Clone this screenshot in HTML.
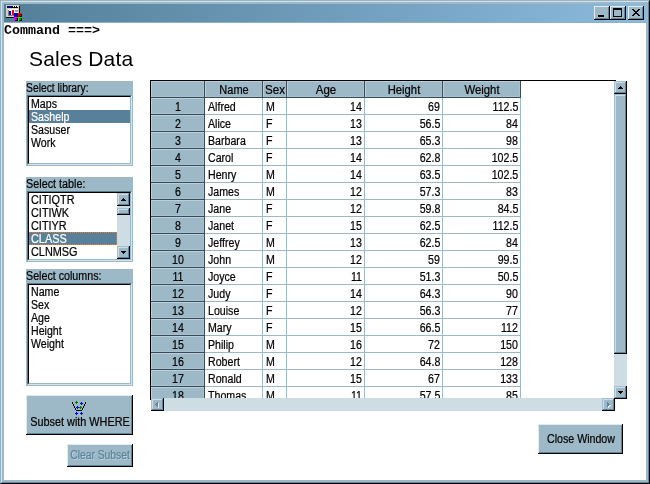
<!DOCTYPE html><html><head><meta charset="utf-8"><title>Sales Data</title><style>
html,body{margin:0;padding:0;}
body{width:650px;height:484px;overflow:hidden;background:#fff;position:relative;font-family:"Liberation Sans",sans-serif;font-size:12.5px;color:#000;}
.a{position:absolute;}
.t{-webkit-text-stroke:0.22px currentColor;display:inline-block;transform:scaleX(.85);white-space:nowrap;line-height:13px;}
.l .t{transform-origin:left center;}
.r .t{transform-origin:right center;}
.c .t{position:absolute;left:50%;top:0;transform-origin:center center;transform:translateX(-50%) scaleX(.85);}
.hc .t{line-height:16px;top:1px;}
.hc{position:absolute;background:#9db9c7;box-shadow:inset 1px 1px 0 #b7d1e1, inset -1px -1px 0 #a6c1d2;text-align:center;}
.cell{position:absolute;height:16px;line-height:16px;}
.panel{position:absolute;background:#9db9c7;}
.lb{position:absolute;background:#fff;border-top:1px solid #000;border-left:1px solid #000;border-right:1px solid #d5e3ec;border-bottom:1px solid #d5e3ec;box-shadow:-1px -1px 0 #5a7a8c;}
.lbo{position:absolute;border:1px solid #5a7a8c;border-right-color:#d3e2eb;border-bottom-color:#d3e2eb;}
.lbi{position:relative;background:#fff;border:1px solid #000;border-right-color:#9db9c7;border-bottom-color:#9db9c7;overflow:hidden;}
.li{position:absolute;left:0;height:13px;line-height:13px;padding-left:2px;}
.li .t{position:relative;top:1px;}
.btn{position:absolute;background:#9db9c7;box-shadow:inset -1px -1px 0 #000, inset 1px 1px 0 #dfe9ef, inset -2px -2px 0 #5f859c;text-align:center;}
.sb{position:absolute;background:#9db9c7;box-shadow:inset -1px -1px 0 #000, inset 1px 1px 0 #a4bfd0, inset -2px -2px 0 #5f859c, inset 2px 2px 0 #cbdde8;}
.wb{position:absolute;background:#9db9c7;box-shadow:inset -1px -1px 0 #000, inset 1px 1px 0 #e3ecf1, inset -2px -2px 0 #5f859c;}
</style></head><body><div id="root" style="position:absolute;left:0;top:0;width:650px;height:484px;overflow:hidden;will-change:transform;">
<div class="a" style="left:0;top:0;width:650px;height:484px;box-sizing:border-box;border:1px solid #98b3c4;border-right-color:#000;border-bottom-color:#000;"></div>
<div class="a" style="left:1px;top:1px;width:648px;height:482px;box-sizing:border-box;border:1px solid #d3e2eb;border-right-color:#5f879f;border-bottom-color:#5f879f;"></div>
<div class="a" style="left:2px;top:2px;width:646px;height:480px;box-sizing:border-box;border:2px solid #9db9c7;"></div>
<div class="a" style="left:4px;top:4px;width:642px;height:18px;background:linear-gradient(to right,#547f99,#8bbadc);"></div>
<div class="a" style="left:4px;top:22px;width:642px;height:1px;background:#8fb0c5;"></div>
<svg class="a" style="left:6px;top:5px" width="16" height="16" viewBox="0 0 16 16" shape-rendering="crispEdges">
<rect x="0" y="0" width="13" height="12" fill="#d4d0c8"/><rect x="13" y="1" width="1" height="12" fill="#000"/><rect x="0" y="12" width="14" height="1" fill="#000"/>
<rect x="1" y="1" width="5" height="2" fill="#000080"/><rect x="6" y="1" width="6" height="2" fill="#000"/>
<rect x="7" y="1" width="1" height="1" fill="#fff"/><rect x="9" y="1" width="1" height="1" fill="#fff"/><rect x="11" y="1" width="1" height="1" fill="#fff"/>
<rect x="2" y="4" width="10" height="7" fill="#fff"/>
<rect x="2" y="5" width="1" height="5" fill="#808080"/><rect x="2" y="10" width="6" height="1" fill="#808080"/>
<rect x="3" y="6" width="2" height="4" fill="#0000ff"/><rect x="6" y="5" width="2" height="5" fill="#ff0000"/><rect x="9" y="5" width="3" height="2" fill="#a0a0a0"/>
<rect x="8" y="8" width="4" height="4" fill="#000"/><rect x="8" y="8" width="4" height="1" fill="#0000ff"/><rect x="8" y="8" width="1" height="4" fill="#0000ff"/><rect x="9" y="9" width="2" height="2" fill="#000090"/>
<rect x="12" y="8" width="4" height="4" fill="#000"/><rect x="12" y="8" width="4" height="1" fill="#ff0000"/><rect x="12" y="8" width="1" height="4" fill="#ff0000"/><rect x="13" y="9" width="2" height="2" fill="#900000"/>
<rect x="8" y="12" width="4" height="4" fill="#000"/><rect x="8" y="12" width="4" height="1" fill="#ff00ff"/><rect x="8" y="12" width="1" height="4" fill="#ff00ff"/><rect x="9" y="13" width="2" height="2" fill="#900090"/>
<rect x="12" y="12" width="4" height="4" fill="#000"/><rect x="12" y="12" width="4" height="1" fill="#00ff00"/><rect x="12" y="12" width="1" height="4" fill="#00ff00"/><rect x="13" y="13" width="2" height="2" fill="#009000"/>
</svg>
<div class="wb" style="left:594px;top:6px;width:16px;height:14px;"><div class="a" style="left:4px;top:9px;width:6px;height:2px;background:#000"></div></div>
<div class="wb" style="left:610px;top:6px;width:16px;height:14px;"><div class="a" style="left:3px;top:2px;width:9px;height:9px;box-sizing:border-box;border:1px solid #000;border-top-width:2px"></div></div>
<div class="wb" style="left:628px;top:6px;width:16px;height:14px;"><svg class="a" style="left:4px;top:3px" width="8" height="7" viewBox="0 0 8 7" shape-rendering="crispEdges"><path d="M0 0h2v1h1v1h2v-1h1v-1h2v1h-1v1h-1v1h-1v1h1v1h1v1h1v1h-2v-1h-1v-1h-2v1h-1v1h-2v-1h1v-1h1v-1h1v-1h-1v-1h-1v-1h-1z" fill="#000"/></svg></div>
<div class="a" style="left:4px;top:24px;height:14px;line-height:14px;font-family:'Liberation Mono',monospace;font-weight:bold;font-size:13.33px;white-space:pre;">Command ===&gt;</div>
<div class="a" style="left:29px;top:47px;font-size:21px;line-height:24px;white-space:nowrap;letter-spacing:.15px;">Sales Data</div>
<div class="panel" style="left:26px;top:81px;width:107px;height:85px;"><div class="a l" style="left:0px;top:0px;height:13px;"><span class="t" style="transform:scaleX(0.826)">Select library:</span></div><div class="lbo" style="left:1px;top:14px;"><div class="lbi" style="width:101px;height:66px;"><div class="li l" style="top:0px;width:99px;"><span class="t" style="transform:scaleX(0.85)">Maps</span></div><div class="li l" style="top:13px;width:99px;background:#58809a;color:#fff;"><span class="t" style="transform:scaleX(0.85)">Sashelp</span></div><div class="li l" style="top:26px;width:99px;"><span class="t" style="transform:scaleX(0.85)">Sasuser</span></div><div class="li l" style="top:39px;width:99px;"><span class="t" style="transform:scaleX(0.85)">Work</span></div></div></div></div>
<div class="panel" style="left:26px;top:177px;width:107px;height:85px;"><div class="a l" style="left:0px;top:0px;height:13px;"><span class="t" style="transform:scaleX(0.865)">Select table:</span></div><div class="lbo" style="left:1px;top:14px;"><div class="lbi" style="width:101px;height:66px;"><div class="li l" style="top:0px;width:86px;"><span class="t" style="transform:scaleX(0.87)">CITIQTR</span></div><div class="li l" style="top:13px;width:86px;"><span class="t" style="transform:scaleX(0.87)">CITIWK</span></div><div class="li l" style="top:26px;width:86px;"><span class="t" style="transform:scaleX(0.87)">CITIYR</span></div><div class="li l" style="top:39px;width:86px;background:#58809a;color:#fff;outline:1px dotted #c08a68;outline-offset:-1px;"><span class="t" style="transform:scaleX(0.87)">CLASS</span></div><div class="li l" style="top:52px;width:86px;"><span class="t" style="transform:scaleX(0.87)">CLNMSG</span></div><div class="a" style="left:88px;top:0;width:13px;height:66px;background:#cedde4;"></div><div class="sb" style="left:88px;top:0;width:13px;height:13px;"><svg class="a" style="left:4px;top:5px" width="5" height="3" viewBox="0 0 5 3" shape-rendering="crispEdges"><path d="M2 0h1v1h1v1h1v1h-5v-1h1v-1h1z" fill="#000"/></svg></div><div class="sb" style="left:88px;top:15px;width:13px;height:7px;"></div><div class="sb" style="left:88px;top:53px;width:13px;height:13px;"><svg class="a" style="left:4px;top:5px" width="5" height="3" viewBox="0 0 5 3" shape-rendering="crispEdges"><path d="M0 0h5v1h-1v1h-1v1h-1v-1h-1v-1h-1z" fill="#000"/></svg></div></div></div></div>
<div class="panel" style="left:26px;top:269px;width:107px;height:117px;"><div class="a l" style="left:0px;top:0px;height:13px;"><span class="t" style="transform:scaleX(0.855)">Select columns:</span></div><div class="lbo" style="left:1px;top:14px;"><div class="lbi" style="width:101px;height:98px;"><div class="li l" style="top:0px;width:99px;"><span class="t" style="transform:scaleX(0.85)">Name</span></div><div class="li l" style="top:13px;width:99px;"><span class="t" style="transform:scaleX(0.85)">Sex</span></div><div class="li l" style="top:26px;width:99px;"><span class="t" style="transform:scaleX(0.85)">Age</span></div><div class="li l" style="top:39px;width:99px;"><span class="t" style="transform:scaleX(0.85)">Height</span></div><div class="li l" style="top:52px;width:99px;"><span class="t" style="transform:scaleX(0.85)">Weight</span></div></div></div></div>
<div class="btn c" style="left:26px;top:395px;width:107px;height:40px;"><div class="a c" style="left:0;width:107px;top:21px;height:13px;"><span class="t" style="transform:translateX(-50%) scaleX(.868)">Subset with WHERE</span></div><svg class="a" style="left:46px;top:6px" width="14" height="14" viewBox="0 0 14 14" shape-rendering="crispEdges"><g fill="#000"><rect x="0" y="1" width="1" height="2"/><rect x="13" y="1" width="1" height="2"/><rect x="1" y="3" width="1" height="2"/><rect x="12" y="3" width="1" height="2"/><rect x="2" y="5" width="1" height="2"/><rect x="11" y="5" width="1" height="2"/><rect x="3" y="7" width="1" height="2"/><rect x="10" y="7" width="1" height="2"/><rect x="4" y="9" width="6" height="1"/></g><rect x="3" y="1" width="3" height="1" fill="#008000"/><rect x="4" y="0" width="1" height="3" fill="#008000"/><rect x="8" y="2" width="3" height="1" fill="#0000ff"/><rect x="9" y="1" width="1" height="3" fill="#0000ff"/><rect x="4" y="6" width="3" height="1" fill="#0000ff"/><rect x="5" y="5" width="1" height="3" fill="#0000ff"/><rect x="7" y="6" width="3" height="1" fill="#008000"/><rect x="8" y="5" width="1" height="3" fill="#008000"/><rect x="3" y="12" width="3" height="1" fill="#0000ff"/><rect x="4" y="11" width="1" height="3" fill="#0000ff"/><rect x="8" y="12" width="3" height="1" fill="#0000ff"/><rect x="9" y="11" width="1" height="3" fill="#0000ff"/></svg></div>
<div class="btn c" style="left:67px;top:444px;width:66px;height:23px;"><div class="a c" style="left:0;width:66px;top:5px;height:13px;color:#5a849c;text-shadow:1px 1px 0 #bdd2de;"><span class="t" style="transform:translateX(-50%) scaleX(.825)">Clear Subset</span></div></div>
<div class="btn c" style="left:538px;top:424px;width:85px;height:30px;"><div class="a c" style="left:0;width:85px;top:9px;height:13px;"><span class="t">Close Window</span></div></div>
<div class="a" style="left:150px;top:80px;width:466px;height:1px;background:#000;"></div>
<div class="a" style="left:150px;top:80px;width:1px;height:320px;background:#000;"></div>
<div class="a" style="left:151px;top:81px;width:463px;height:317px;overflow:hidden;">
<div class="hc c" style="left:0px;top:0px;width:53px;height:16px;line-height:16px;"><span class="t" style="transform:translateX(-50%) scaleX(0.85)"></span></div><div class="a" style="left:53px;top:0px;width:1px;height:17px;background:#3c4a54;"></div><div class="a" style="left:0px;top:16px;width:54px;height:1px;background:#3c4a54;"></div>
<div class="hc c" style="left:54px;top:0px;width:57px;height:16px;line-height:16px;"><span class="t" style="transform:translateX(-50%) scaleX(0.88)">Name</span></div><div class="a" style="left:111px;top:0px;width:1px;height:17px;background:#3c4a54;"></div><div class="a" style="left:54px;top:16px;width:58px;height:1px;background:#3c4a54;"></div>
<div class="hc c" style="left:112px;top:0px;width:23px;height:16px;line-height:16px;"><span class="t" style="transform:translateX(-50%) scaleX(0.93)">Sex</span></div><div class="a" style="left:135px;top:0px;width:1px;height:17px;background:#3c4a54;"></div><div class="a" style="left:112px;top:16px;width:24px;height:1px;background:#3c4a54;"></div>
<div class="hc c" style="left:136px;top:0px;width:77px;height:16px;line-height:16px;"><span class="t" style="transform:translateX(-50%) scaleX(0.92)">Age</span></div><div class="a" style="left:213px;top:0px;width:1px;height:17px;background:#3c4a54;"></div><div class="a" style="left:136px;top:16px;width:78px;height:1px;background:#3c4a54;"></div>
<div class="hc c" style="left:214px;top:0px;width:77px;height:16px;line-height:16px;"><span class="t" style="transform:translateX(-50%) scaleX(0.9)">Height</span></div><div class="a" style="left:291px;top:0px;width:1px;height:17px;background:#3c4a54;"></div><div class="a" style="left:214px;top:16px;width:78px;height:1px;background:#3c4a54;"></div>
<div class="hc c" style="left:292px;top:0px;width:77px;height:16px;line-height:16px;"><span class="t" style="transform:translateX(-50%) scaleX(0.91)">Weight</span></div><div class="a" style="left:369px;top:0px;width:1px;height:17px;background:#3c4a54;"></div><div class="a" style="left:292px;top:16px;width:78px;height:1px;background:#3c4a54;"></div>
<div class="hc c" style="left:0px;top:17px;width:53px;height:16px;line-height:16px;"><span class="t" style="transform:translateX(-50%) scaleX(0.85)">1</span></div><div class="a" style="left:53px;top:17px;width:1px;height:17px;background:#3c4a54;"></div><div class="a" style="left:0px;top:33px;width:54px;height:1px;background:#3c4a54;"></div>
<div class="cell l" style="left:57px;top:17px;"><span class="t" style="position:relative;top:1px">Alfred</span></div>
<div class="a" style="left:111px;top:17px;width:1px;height:17px;background:#9db9c7;"></div>
<div class="cell l" style="left:115px;top:17px;"><span class="t" style="position:relative;top:1px">M</span></div>
<div class="a" style="left:135px;top:17px;width:1px;height:17px;background:#9db9c7;"></div>
<div class="cell r" style="left:136px;width:75px;text-align:right;top:17px;"><span class="t" style="position:relative;top:1px">14</span></div>
<div class="a" style="left:213px;top:17px;width:1px;height:17px;background:#9db9c7;"></div>
<div class="cell r" style="left:214px;width:75px;text-align:right;top:17px;"><span class="t" style="position:relative;top:1px">69</span></div>
<div class="a" style="left:291px;top:17px;width:1px;height:17px;background:#9db9c7;"></div>
<div class="cell r" style="left:292px;width:75px;text-align:right;top:17px;"><span class="t" style="position:relative;top:1px">112.5</span></div>
<div class="a" style="left:369px;top:17px;width:1px;height:17px;background:#9db9c7;"></div>
<div class="a" style="left:54px;top:33px;width:316px;height:1px;background:#9db9c7;"></div>
<div class="hc c" style="left:0px;top:34px;width:53px;height:16px;line-height:16px;"><span class="t" style="transform:translateX(-50%) scaleX(0.85)">2</span></div><div class="a" style="left:53px;top:34px;width:1px;height:17px;background:#3c4a54;"></div><div class="a" style="left:0px;top:50px;width:54px;height:1px;background:#3c4a54;"></div>
<div class="cell l" style="left:57px;top:34px;"><span class="t" style="position:relative;top:1px">Alice</span></div>
<div class="a" style="left:111px;top:34px;width:1px;height:17px;background:#9db9c7;"></div>
<div class="cell l" style="left:115px;top:34px;"><span class="t" style="position:relative;top:1px">F</span></div>
<div class="a" style="left:135px;top:34px;width:1px;height:17px;background:#9db9c7;"></div>
<div class="cell r" style="left:136px;width:75px;text-align:right;top:34px;"><span class="t" style="position:relative;top:1px">13</span></div>
<div class="a" style="left:213px;top:34px;width:1px;height:17px;background:#9db9c7;"></div>
<div class="cell r" style="left:214px;width:75px;text-align:right;top:34px;"><span class="t" style="position:relative;top:1px">56.5</span></div>
<div class="a" style="left:291px;top:34px;width:1px;height:17px;background:#9db9c7;"></div>
<div class="cell r" style="left:292px;width:75px;text-align:right;top:34px;"><span class="t" style="position:relative;top:1px">84</span></div>
<div class="a" style="left:369px;top:34px;width:1px;height:17px;background:#9db9c7;"></div>
<div class="a" style="left:54px;top:50px;width:316px;height:1px;background:#9db9c7;"></div>
<div class="hc c" style="left:0px;top:51px;width:53px;height:16px;line-height:16px;"><span class="t" style="transform:translateX(-50%) scaleX(0.85)">3</span></div><div class="a" style="left:53px;top:51px;width:1px;height:17px;background:#3c4a54;"></div><div class="a" style="left:0px;top:67px;width:54px;height:1px;background:#3c4a54;"></div>
<div class="cell l" style="left:57px;top:51px;"><span class="t" style="position:relative;top:1px">Barbara</span></div>
<div class="a" style="left:111px;top:51px;width:1px;height:17px;background:#9db9c7;"></div>
<div class="cell l" style="left:115px;top:51px;"><span class="t" style="position:relative;top:1px">F</span></div>
<div class="a" style="left:135px;top:51px;width:1px;height:17px;background:#9db9c7;"></div>
<div class="cell r" style="left:136px;width:75px;text-align:right;top:51px;"><span class="t" style="position:relative;top:1px">13</span></div>
<div class="a" style="left:213px;top:51px;width:1px;height:17px;background:#9db9c7;"></div>
<div class="cell r" style="left:214px;width:75px;text-align:right;top:51px;"><span class="t" style="position:relative;top:1px">65.3</span></div>
<div class="a" style="left:291px;top:51px;width:1px;height:17px;background:#9db9c7;"></div>
<div class="cell r" style="left:292px;width:75px;text-align:right;top:51px;"><span class="t" style="position:relative;top:1px">98</span></div>
<div class="a" style="left:369px;top:51px;width:1px;height:17px;background:#9db9c7;"></div>
<div class="a" style="left:54px;top:67px;width:316px;height:1px;background:#9db9c7;"></div>
<div class="hc c" style="left:0px;top:68px;width:53px;height:16px;line-height:16px;"><span class="t" style="transform:translateX(-50%) scaleX(0.85)">4</span></div><div class="a" style="left:53px;top:68px;width:1px;height:17px;background:#3c4a54;"></div><div class="a" style="left:0px;top:84px;width:54px;height:1px;background:#3c4a54;"></div>
<div class="cell l" style="left:57px;top:68px;"><span class="t" style="position:relative;top:1px">Carol</span></div>
<div class="a" style="left:111px;top:68px;width:1px;height:17px;background:#9db9c7;"></div>
<div class="cell l" style="left:115px;top:68px;"><span class="t" style="position:relative;top:1px">F</span></div>
<div class="a" style="left:135px;top:68px;width:1px;height:17px;background:#9db9c7;"></div>
<div class="cell r" style="left:136px;width:75px;text-align:right;top:68px;"><span class="t" style="position:relative;top:1px">14</span></div>
<div class="a" style="left:213px;top:68px;width:1px;height:17px;background:#9db9c7;"></div>
<div class="cell r" style="left:214px;width:75px;text-align:right;top:68px;"><span class="t" style="position:relative;top:1px">62.8</span></div>
<div class="a" style="left:291px;top:68px;width:1px;height:17px;background:#9db9c7;"></div>
<div class="cell r" style="left:292px;width:75px;text-align:right;top:68px;"><span class="t" style="position:relative;top:1px">102.5</span></div>
<div class="a" style="left:369px;top:68px;width:1px;height:17px;background:#9db9c7;"></div>
<div class="a" style="left:54px;top:84px;width:316px;height:1px;background:#9db9c7;"></div>
<div class="hc c" style="left:0px;top:85px;width:53px;height:16px;line-height:16px;"><span class="t" style="transform:translateX(-50%) scaleX(0.85)">5</span></div><div class="a" style="left:53px;top:85px;width:1px;height:17px;background:#3c4a54;"></div><div class="a" style="left:0px;top:101px;width:54px;height:1px;background:#3c4a54;"></div>
<div class="cell l" style="left:57px;top:85px;"><span class="t" style="position:relative;top:1px">Henry</span></div>
<div class="a" style="left:111px;top:85px;width:1px;height:17px;background:#9db9c7;"></div>
<div class="cell l" style="left:115px;top:85px;"><span class="t" style="position:relative;top:1px">M</span></div>
<div class="a" style="left:135px;top:85px;width:1px;height:17px;background:#9db9c7;"></div>
<div class="cell r" style="left:136px;width:75px;text-align:right;top:85px;"><span class="t" style="position:relative;top:1px">14</span></div>
<div class="a" style="left:213px;top:85px;width:1px;height:17px;background:#9db9c7;"></div>
<div class="cell r" style="left:214px;width:75px;text-align:right;top:85px;"><span class="t" style="position:relative;top:1px">63.5</span></div>
<div class="a" style="left:291px;top:85px;width:1px;height:17px;background:#9db9c7;"></div>
<div class="cell r" style="left:292px;width:75px;text-align:right;top:85px;"><span class="t" style="position:relative;top:1px">102.5</span></div>
<div class="a" style="left:369px;top:85px;width:1px;height:17px;background:#9db9c7;"></div>
<div class="a" style="left:54px;top:101px;width:316px;height:1px;background:#9db9c7;"></div>
<div class="hc c" style="left:0px;top:102px;width:53px;height:16px;line-height:16px;"><span class="t" style="transform:translateX(-50%) scaleX(0.85)">6</span></div><div class="a" style="left:53px;top:102px;width:1px;height:17px;background:#3c4a54;"></div><div class="a" style="left:0px;top:118px;width:54px;height:1px;background:#3c4a54;"></div>
<div class="cell l" style="left:57px;top:102px;"><span class="t" style="position:relative;top:1px">James</span></div>
<div class="a" style="left:111px;top:102px;width:1px;height:17px;background:#9db9c7;"></div>
<div class="cell l" style="left:115px;top:102px;"><span class="t" style="position:relative;top:1px">M</span></div>
<div class="a" style="left:135px;top:102px;width:1px;height:17px;background:#9db9c7;"></div>
<div class="cell r" style="left:136px;width:75px;text-align:right;top:102px;"><span class="t" style="position:relative;top:1px">12</span></div>
<div class="a" style="left:213px;top:102px;width:1px;height:17px;background:#9db9c7;"></div>
<div class="cell r" style="left:214px;width:75px;text-align:right;top:102px;"><span class="t" style="position:relative;top:1px">57.3</span></div>
<div class="a" style="left:291px;top:102px;width:1px;height:17px;background:#9db9c7;"></div>
<div class="cell r" style="left:292px;width:75px;text-align:right;top:102px;"><span class="t" style="position:relative;top:1px">83</span></div>
<div class="a" style="left:369px;top:102px;width:1px;height:17px;background:#9db9c7;"></div>
<div class="a" style="left:54px;top:118px;width:316px;height:1px;background:#9db9c7;"></div>
<div class="hc c" style="left:0px;top:119px;width:53px;height:16px;line-height:16px;"><span class="t" style="transform:translateX(-50%) scaleX(0.85)">7</span></div><div class="a" style="left:53px;top:119px;width:1px;height:17px;background:#3c4a54;"></div><div class="a" style="left:0px;top:135px;width:54px;height:1px;background:#3c4a54;"></div>
<div class="cell l" style="left:57px;top:119px;"><span class="t" style="position:relative;top:1px">Jane</span></div>
<div class="a" style="left:111px;top:119px;width:1px;height:17px;background:#9db9c7;"></div>
<div class="cell l" style="left:115px;top:119px;"><span class="t" style="position:relative;top:1px">F</span></div>
<div class="a" style="left:135px;top:119px;width:1px;height:17px;background:#9db9c7;"></div>
<div class="cell r" style="left:136px;width:75px;text-align:right;top:119px;"><span class="t" style="position:relative;top:1px">12</span></div>
<div class="a" style="left:213px;top:119px;width:1px;height:17px;background:#9db9c7;"></div>
<div class="cell r" style="left:214px;width:75px;text-align:right;top:119px;"><span class="t" style="position:relative;top:1px">59.8</span></div>
<div class="a" style="left:291px;top:119px;width:1px;height:17px;background:#9db9c7;"></div>
<div class="cell r" style="left:292px;width:75px;text-align:right;top:119px;"><span class="t" style="position:relative;top:1px">84.5</span></div>
<div class="a" style="left:369px;top:119px;width:1px;height:17px;background:#9db9c7;"></div>
<div class="a" style="left:54px;top:135px;width:316px;height:1px;background:#9db9c7;"></div>
<div class="hc c" style="left:0px;top:136px;width:53px;height:16px;line-height:16px;"><span class="t" style="transform:translateX(-50%) scaleX(0.85)">8</span></div><div class="a" style="left:53px;top:136px;width:1px;height:17px;background:#3c4a54;"></div><div class="a" style="left:0px;top:152px;width:54px;height:1px;background:#3c4a54;"></div>
<div class="cell l" style="left:57px;top:136px;"><span class="t" style="position:relative;top:1px">Janet</span></div>
<div class="a" style="left:111px;top:136px;width:1px;height:17px;background:#9db9c7;"></div>
<div class="cell l" style="left:115px;top:136px;"><span class="t" style="position:relative;top:1px">F</span></div>
<div class="a" style="left:135px;top:136px;width:1px;height:17px;background:#9db9c7;"></div>
<div class="cell r" style="left:136px;width:75px;text-align:right;top:136px;"><span class="t" style="position:relative;top:1px">15</span></div>
<div class="a" style="left:213px;top:136px;width:1px;height:17px;background:#9db9c7;"></div>
<div class="cell r" style="left:214px;width:75px;text-align:right;top:136px;"><span class="t" style="position:relative;top:1px">62.5</span></div>
<div class="a" style="left:291px;top:136px;width:1px;height:17px;background:#9db9c7;"></div>
<div class="cell r" style="left:292px;width:75px;text-align:right;top:136px;"><span class="t" style="position:relative;top:1px">112.5</span></div>
<div class="a" style="left:369px;top:136px;width:1px;height:17px;background:#9db9c7;"></div>
<div class="a" style="left:54px;top:152px;width:316px;height:1px;background:#9db9c7;"></div>
<div class="hc c" style="left:0px;top:153px;width:53px;height:16px;line-height:16px;"><span class="t" style="transform:translateX(-50%) scaleX(0.85)">9</span></div><div class="a" style="left:53px;top:153px;width:1px;height:17px;background:#3c4a54;"></div><div class="a" style="left:0px;top:169px;width:54px;height:1px;background:#3c4a54;"></div>
<div class="cell l" style="left:57px;top:153px;"><span class="t" style="position:relative;top:1px">Jeffrey</span></div>
<div class="a" style="left:111px;top:153px;width:1px;height:17px;background:#9db9c7;"></div>
<div class="cell l" style="left:115px;top:153px;"><span class="t" style="position:relative;top:1px">M</span></div>
<div class="a" style="left:135px;top:153px;width:1px;height:17px;background:#9db9c7;"></div>
<div class="cell r" style="left:136px;width:75px;text-align:right;top:153px;"><span class="t" style="position:relative;top:1px">13</span></div>
<div class="a" style="left:213px;top:153px;width:1px;height:17px;background:#9db9c7;"></div>
<div class="cell r" style="left:214px;width:75px;text-align:right;top:153px;"><span class="t" style="position:relative;top:1px">62.5</span></div>
<div class="a" style="left:291px;top:153px;width:1px;height:17px;background:#9db9c7;"></div>
<div class="cell r" style="left:292px;width:75px;text-align:right;top:153px;"><span class="t" style="position:relative;top:1px">84</span></div>
<div class="a" style="left:369px;top:153px;width:1px;height:17px;background:#9db9c7;"></div>
<div class="a" style="left:54px;top:169px;width:316px;height:1px;background:#9db9c7;"></div>
<div class="hc c" style="left:0px;top:170px;width:53px;height:16px;line-height:16px;"><span class="t" style="transform:translateX(-50%) scaleX(0.85)">10</span></div><div class="a" style="left:53px;top:170px;width:1px;height:17px;background:#3c4a54;"></div><div class="a" style="left:0px;top:186px;width:54px;height:1px;background:#3c4a54;"></div>
<div class="cell l" style="left:57px;top:170px;"><span class="t" style="position:relative;top:1px">John</span></div>
<div class="a" style="left:111px;top:170px;width:1px;height:17px;background:#9db9c7;"></div>
<div class="cell l" style="left:115px;top:170px;"><span class="t" style="position:relative;top:1px">M</span></div>
<div class="a" style="left:135px;top:170px;width:1px;height:17px;background:#9db9c7;"></div>
<div class="cell r" style="left:136px;width:75px;text-align:right;top:170px;"><span class="t" style="position:relative;top:1px">12</span></div>
<div class="a" style="left:213px;top:170px;width:1px;height:17px;background:#9db9c7;"></div>
<div class="cell r" style="left:214px;width:75px;text-align:right;top:170px;"><span class="t" style="position:relative;top:1px">59</span></div>
<div class="a" style="left:291px;top:170px;width:1px;height:17px;background:#9db9c7;"></div>
<div class="cell r" style="left:292px;width:75px;text-align:right;top:170px;"><span class="t" style="position:relative;top:1px">99.5</span></div>
<div class="a" style="left:369px;top:170px;width:1px;height:17px;background:#9db9c7;"></div>
<div class="a" style="left:54px;top:186px;width:316px;height:1px;background:#9db9c7;"></div>
<div class="hc c" style="left:0px;top:187px;width:53px;height:16px;line-height:16px;"><span class="t" style="transform:translateX(-50%) scaleX(0.85)">11</span></div><div class="a" style="left:53px;top:187px;width:1px;height:17px;background:#3c4a54;"></div><div class="a" style="left:0px;top:203px;width:54px;height:1px;background:#3c4a54;"></div>
<div class="cell l" style="left:57px;top:187px;"><span class="t" style="position:relative;top:1px">Joyce</span></div>
<div class="a" style="left:111px;top:187px;width:1px;height:17px;background:#9db9c7;"></div>
<div class="cell l" style="left:115px;top:187px;"><span class="t" style="position:relative;top:1px">F</span></div>
<div class="a" style="left:135px;top:187px;width:1px;height:17px;background:#9db9c7;"></div>
<div class="cell r" style="left:136px;width:75px;text-align:right;top:187px;"><span class="t" style="position:relative;top:1px">11</span></div>
<div class="a" style="left:213px;top:187px;width:1px;height:17px;background:#9db9c7;"></div>
<div class="cell r" style="left:214px;width:75px;text-align:right;top:187px;"><span class="t" style="position:relative;top:1px">51.3</span></div>
<div class="a" style="left:291px;top:187px;width:1px;height:17px;background:#9db9c7;"></div>
<div class="cell r" style="left:292px;width:75px;text-align:right;top:187px;"><span class="t" style="position:relative;top:1px">50.5</span></div>
<div class="a" style="left:369px;top:187px;width:1px;height:17px;background:#9db9c7;"></div>
<div class="a" style="left:54px;top:203px;width:316px;height:1px;background:#9db9c7;"></div>
<div class="hc c" style="left:0px;top:204px;width:53px;height:16px;line-height:16px;"><span class="t" style="transform:translateX(-50%) scaleX(0.85)">12</span></div><div class="a" style="left:53px;top:204px;width:1px;height:17px;background:#3c4a54;"></div><div class="a" style="left:0px;top:220px;width:54px;height:1px;background:#3c4a54;"></div>
<div class="cell l" style="left:57px;top:204px;"><span class="t" style="position:relative;top:1px">Judy</span></div>
<div class="a" style="left:111px;top:204px;width:1px;height:17px;background:#9db9c7;"></div>
<div class="cell l" style="left:115px;top:204px;"><span class="t" style="position:relative;top:1px">F</span></div>
<div class="a" style="left:135px;top:204px;width:1px;height:17px;background:#9db9c7;"></div>
<div class="cell r" style="left:136px;width:75px;text-align:right;top:204px;"><span class="t" style="position:relative;top:1px">14</span></div>
<div class="a" style="left:213px;top:204px;width:1px;height:17px;background:#9db9c7;"></div>
<div class="cell r" style="left:214px;width:75px;text-align:right;top:204px;"><span class="t" style="position:relative;top:1px">64.3</span></div>
<div class="a" style="left:291px;top:204px;width:1px;height:17px;background:#9db9c7;"></div>
<div class="cell r" style="left:292px;width:75px;text-align:right;top:204px;"><span class="t" style="position:relative;top:1px">90</span></div>
<div class="a" style="left:369px;top:204px;width:1px;height:17px;background:#9db9c7;"></div>
<div class="a" style="left:54px;top:220px;width:316px;height:1px;background:#9db9c7;"></div>
<div class="hc c" style="left:0px;top:221px;width:53px;height:16px;line-height:16px;"><span class="t" style="transform:translateX(-50%) scaleX(0.85)">13</span></div><div class="a" style="left:53px;top:221px;width:1px;height:17px;background:#3c4a54;"></div><div class="a" style="left:0px;top:237px;width:54px;height:1px;background:#3c4a54;"></div>
<div class="cell l" style="left:57px;top:221px;"><span class="t" style="position:relative;top:1px">Louise</span></div>
<div class="a" style="left:111px;top:221px;width:1px;height:17px;background:#9db9c7;"></div>
<div class="cell l" style="left:115px;top:221px;"><span class="t" style="position:relative;top:1px">F</span></div>
<div class="a" style="left:135px;top:221px;width:1px;height:17px;background:#9db9c7;"></div>
<div class="cell r" style="left:136px;width:75px;text-align:right;top:221px;"><span class="t" style="position:relative;top:1px">12</span></div>
<div class="a" style="left:213px;top:221px;width:1px;height:17px;background:#9db9c7;"></div>
<div class="cell r" style="left:214px;width:75px;text-align:right;top:221px;"><span class="t" style="position:relative;top:1px">56.3</span></div>
<div class="a" style="left:291px;top:221px;width:1px;height:17px;background:#9db9c7;"></div>
<div class="cell r" style="left:292px;width:75px;text-align:right;top:221px;"><span class="t" style="position:relative;top:1px">77</span></div>
<div class="a" style="left:369px;top:221px;width:1px;height:17px;background:#9db9c7;"></div>
<div class="a" style="left:54px;top:237px;width:316px;height:1px;background:#9db9c7;"></div>
<div class="hc c" style="left:0px;top:238px;width:53px;height:16px;line-height:16px;"><span class="t" style="transform:translateX(-50%) scaleX(0.85)">14</span></div><div class="a" style="left:53px;top:238px;width:1px;height:17px;background:#3c4a54;"></div><div class="a" style="left:0px;top:254px;width:54px;height:1px;background:#3c4a54;"></div>
<div class="cell l" style="left:57px;top:238px;"><span class="t" style="position:relative;top:1px">Mary</span></div>
<div class="a" style="left:111px;top:238px;width:1px;height:17px;background:#9db9c7;"></div>
<div class="cell l" style="left:115px;top:238px;"><span class="t" style="position:relative;top:1px">F</span></div>
<div class="a" style="left:135px;top:238px;width:1px;height:17px;background:#9db9c7;"></div>
<div class="cell r" style="left:136px;width:75px;text-align:right;top:238px;"><span class="t" style="position:relative;top:1px">15</span></div>
<div class="a" style="left:213px;top:238px;width:1px;height:17px;background:#9db9c7;"></div>
<div class="cell r" style="left:214px;width:75px;text-align:right;top:238px;"><span class="t" style="position:relative;top:1px">66.5</span></div>
<div class="a" style="left:291px;top:238px;width:1px;height:17px;background:#9db9c7;"></div>
<div class="cell r" style="left:292px;width:75px;text-align:right;top:238px;"><span class="t" style="position:relative;top:1px">112</span></div>
<div class="a" style="left:369px;top:238px;width:1px;height:17px;background:#9db9c7;"></div>
<div class="a" style="left:54px;top:254px;width:316px;height:1px;background:#9db9c7;"></div>
<div class="hc c" style="left:0px;top:255px;width:53px;height:16px;line-height:16px;"><span class="t" style="transform:translateX(-50%) scaleX(0.85)">15</span></div><div class="a" style="left:53px;top:255px;width:1px;height:17px;background:#3c4a54;"></div><div class="a" style="left:0px;top:271px;width:54px;height:1px;background:#3c4a54;"></div>
<div class="cell l" style="left:57px;top:255px;"><span class="t" style="position:relative;top:1px">Philip</span></div>
<div class="a" style="left:111px;top:255px;width:1px;height:17px;background:#9db9c7;"></div>
<div class="cell l" style="left:115px;top:255px;"><span class="t" style="position:relative;top:1px">M</span></div>
<div class="a" style="left:135px;top:255px;width:1px;height:17px;background:#9db9c7;"></div>
<div class="cell r" style="left:136px;width:75px;text-align:right;top:255px;"><span class="t" style="position:relative;top:1px">16</span></div>
<div class="a" style="left:213px;top:255px;width:1px;height:17px;background:#9db9c7;"></div>
<div class="cell r" style="left:214px;width:75px;text-align:right;top:255px;"><span class="t" style="position:relative;top:1px">72</span></div>
<div class="a" style="left:291px;top:255px;width:1px;height:17px;background:#9db9c7;"></div>
<div class="cell r" style="left:292px;width:75px;text-align:right;top:255px;"><span class="t" style="position:relative;top:1px">150</span></div>
<div class="a" style="left:369px;top:255px;width:1px;height:17px;background:#9db9c7;"></div>
<div class="a" style="left:54px;top:271px;width:316px;height:1px;background:#9db9c7;"></div>
<div class="hc c" style="left:0px;top:272px;width:53px;height:16px;line-height:16px;"><span class="t" style="transform:translateX(-50%) scaleX(0.85)">16</span></div><div class="a" style="left:53px;top:272px;width:1px;height:17px;background:#3c4a54;"></div><div class="a" style="left:0px;top:288px;width:54px;height:1px;background:#3c4a54;"></div>
<div class="cell l" style="left:57px;top:272px;"><span class="t" style="position:relative;top:1px">Robert</span></div>
<div class="a" style="left:111px;top:272px;width:1px;height:17px;background:#9db9c7;"></div>
<div class="cell l" style="left:115px;top:272px;"><span class="t" style="position:relative;top:1px">M</span></div>
<div class="a" style="left:135px;top:272px;width:1px;height:17px;background:#9db9c7;"></div>
<div class="cell r" style="left:136px;width:75px;text-align:right;top:272px;"><span class="t" style="position:relative;top:1px">12</span></div>
<div class="a" style="left:213px;top:272px;width:1px;height:17px;background:#9db9c7;"></div>
<div class="cell r" style="left:214px;width:75px;text-align:right;top:272px;"><span class="t" style="position:relative;top:1px">64.8</span></div>
<div class="a" style="left:291px;top:272px;width:1px;height:17px;background:#9db9c7;"></div>
<div class="cell r" style="left:292px;width:75px;text-align:right;top:272px;"><span class="t" style="position:relative;top:1px">128</span></div>
<div class="a" style="left:369px;top:272px;width:1px;height:17px;background:#9db9c7;"></div>
<div class="a" style="left:54px;top:288px;width:316px;height:1px;background:#9db9c7;"></div>
<div class="hc c" style="left:0px;top:289px;width:53px;height:16px;line-height:16px;"><span class="t" style="transform:translateX(-50%) scaleX(0.85)">17</span></div><div class="a" style="left:53px;top:289px;width:1px;height:17px;background:#3c4a54;"></div><div class="a" style="left:0px;top:305px;width:54px;height:1px;background:#3c4a54;"></div>
<div class="cell l" style="left:57px;top:289px;"><span class="t" style="position:relative;top:1px">Ronald</span></div>
<div class="a" style="left:111px;top:289px;width:1px;height:17px;background:#9db9c7;"></div>
<div class="cell l" style="left:115px;top:289px;"><span class="t" style="position:relative;top:1px">M</span></div>
<div class="a" style="left:135px;top:289px;width:1px;height:17px;background:#9db9c7;"></div>
<div class="cell r" style="left:136px;width:75px;text-align:right;top:289px;"><span class="t" style="position:relative;top:1px">15</span></div>
<div class="a" style="left:213px;top:289px;width:1px;height:17px;background:#9db9c7;"></div>
<div class="cell r" style="left:214px;width:75px;text-align:right;top:289px;"><span class="t" style="position:relative;top:1px">67</span></div>
<div class="a" style="left:291px;top:289px;width:1px;height:17px;background:#9db9c7;"></div>
<div class="cell r" style="left:292px;width:75px;text-align:right;top:289px;"><span class="t" style="position:relative;top:1px">133</span></div>
<div class="a" style="left:369px;top:289px;width:1px;height:17px;background:#9db9c7;"></div>
<div class="a" style="left:54px;top:305px;width:316px;height:1px;background:#9db9c7;"></div>
<div class="hc c" style="left:0px;top:306px;width:53px;height:16px;line-height:16px;"><span class="t" style="transform:translateX(-50%) scaleX(0.85)">18</span></div><div class="a" style="left:53px;top:306px;width:1px;height:17px;background:#3c4a54;"></div><div class="a" style="left:0px;top:322px;width:54px;height:1px;background:#3c4a54;"></div>
<div class="cell l" style="left:57px;top:306px;"><span class="t" style="position:relative;top:1px">Thomas</span></div>
<div class="a" style="left:111px;top:306px;width:1px;height:17px;background:#9db9c7;"></div>
<div class="cell l" style="left:115px;top:306px;"><span class="t" style="position:relative;top:1px">M</span></div>
<div class="a" style="left:135px;top:306px;width:1px;height:17px;background:#9db9c7;"></div>
<div class="cell r" style="left:136px;width:75px;text-align:right;top:306px;"><span class="t" style="position:relative;top:1px">11</span></div>
<div class="a" style="left:213px;top:306px;width:1px;height:17px;background:#9db9c7;"></div>
<div class="cell r" style="left:214px;width:75px;text-align:right;top:306px;"><span class="t" style="position:relative;top:1px">57.5</span></div>
<div class="a" style="left:291px;top:306px;width:1px;height:17px;background:#9db9c7;"></div>
<div class="cell r" style="left:292px;width:75px;text-align:right;top:306px;"><span class="t" style="position:relative;top:1px">85</span></div>
<div class="a" style="left:369px;top:306px;width:1px;height:17px;background:#9db9c7;"></div>
<div class="a" style="left:54px;top:322px;width:316px;height:1px;background:#9db9c7;"></div>
</div>
<div class="a" style="left:614px;top:81px;width:13px;height:317px;background:#cedde4;"></div>
<div class="sb" style="left:614px;top:81px;width:13px;height:13px;"><svg class="a" style="left:4px;top:5px" width="5" height="3" viewBox="0 0 5 3" shape-rendering="crispEdges"><path d="M2 0h1v1h1v1h1v1h-5v-1h1v-1h1z" fill="#000"/></svg></div>
<div class="sb" style="left:614px;top:94px;width:13px;height:260px;"></div>
<div class="sb" style="left:614px;top:386px;width:13px;height:13px;"><svg class="a" style="left:4px;top:5px" width="5" height="3" viewBox="0 0 5 3" shape-rendering="crispEdges"><path d="M0 0h5v1h-1v1h-1v1h-1v-1h-1v-1h-1z" fill="#000"/></svg></div>
<div class="a" style="left:151px;top:398px;width:463px;height:13px;background:#cedde4;"></div>
<div class="sb" style="left:151px;top:398px;width:13px;height:13px;"><svg class="a" style="left:4px;top:4px" width="4" height="6" viewBox="0 0 4 6" shape-rendering="crispEdges"><g fill="#5f869f"><rect x="0" y="2" width="1" height="1"/><rect x="1" y="1" width="1" height="3"/><rect x="2" y="0" width="1" height="5"/></g><rect x="3" y="1" width="1" height="5" fill="#e6eef3"/></svg></div>
<div class="sb" style="left:602px;top:398px;width:13px;height:13px;"><svg class="a" style="left:5px;top:4px" width="4" height="6" viewBox="0 0 4 6" shape-rendering="crispEdges"><g fill="#5f869f"><rect x="0" y="0" width="1" height="5"/><rect x="1" y="1" width="1" height="3"/><rect x="2" y="2" width="1" height="1"/></g><g fill="#e6eef3"><rect x="1" y="4" width="1" height="2"/><rect x="2" y="3" width="1" height="2"/><rect x="3" y="3" width="1" height="1"/></g></svg></div>
</div></body></html>
